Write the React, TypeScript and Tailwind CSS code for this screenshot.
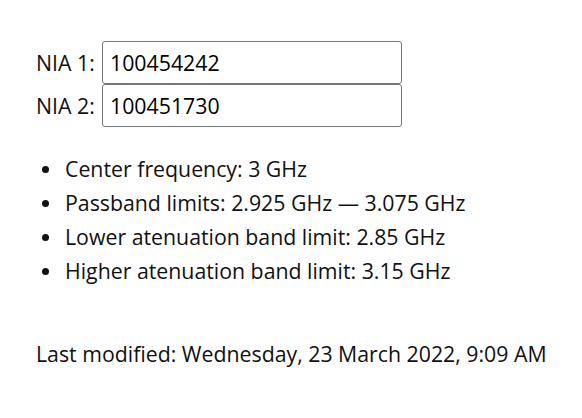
import React from "react";

const items = [
  "Center frequency: 3 GHz",
  "Passband limits: 2.925 GHz — 3.075 GHz",
  "Lower atenuation band limit: 2.85 GHz",
  "Higher atenuation band limit: 3.15 GHz",
];

export default function App() {
  return (
    <div
      className="min-h-screen bg-white text-[#111] pl-[36px] pt-[41px] text-[21.3px]"
      style={{ fontFamily: '"Open Sans", sans-serif' }}
    >
      <div className="flex flex-col">
        <label className="flex items-center">
          <span className="w-[66px]">NIA 1:</span>
          <input
            defaultValue="100454242"
            className="w-[300px] h-[43px] border border-[#767676] rounded-[3px] px-[7px] text-[21.3px] text-black outline-none"
          />
        </label>
        <label className="flex items-center">
          <span className="w-[66px]">NIA 2:</span>
          <input
            defaultValue="100451730"
            className="w-[300px] h-[43px] border border-[#767676] rounded-[3px] px-[7px] text-[21.3px] text-black outline-none"
          />
        </label>
      </div>

      <ul className="mt-[25px]">
        {items.map((t) => (
          <li key={t} className="flex items-center h-[34px]">
            <span className="w-[7px] h-[7px] rounded-full bg-[#111] ml-[6px] mr-[16px]" />
            {t}
          </li>
        ))}
      </ul>

      <p className="mt-[50px]">Last modified: Wednesday, 23 March 2022, 9:09 AM</p>
    </div>
  );
}
